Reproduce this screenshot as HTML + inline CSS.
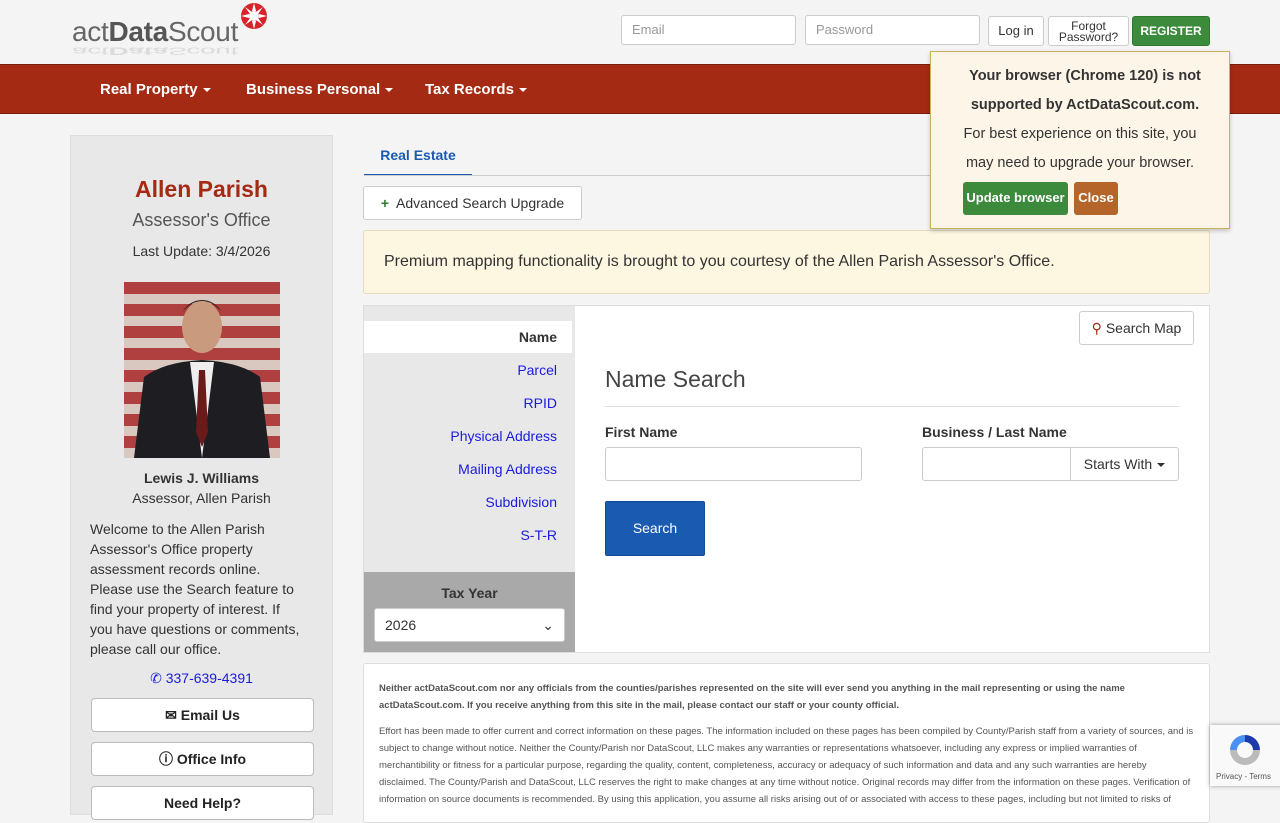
<!DOCTYPE html>
<html><head><meta charset="utf-8"><style>
*{box-sizing:border-box}
body{margin:0;width:1280px;height:800px;overflow:hidden;background:#f4f4f4;font-family:"Liberation Sans",sans-serif;color:#333;position:relative}
.a{position:absolute}
.inp{position:absolute;background:#fff;border:1px solid #ccc;border-radius:3px;font-size:13px;color:#999;padding:6px 10px}
.btn{position:absolute;border:1px solid #ccc;background:#fff;border-radius:3px;font-size:13px;text-align:center}
.nav{top:64px;left:0;width:1280px;height:50px;background:#a52a14;border-top:1px solid #7a1d0d;border-bottom:1px solid #7a1d0d}
.nav span{position:absolute;top:16px;color:#fff;font-weight:bold;font-size:15px}
.caret{display:inline-block;border-top:4px solid currentColor;border-left:4px solid transparent;border-right:4px solid transparent;vertical-align:middle;margin-left:5px}
.side{left:70px;top:135px;width:263px;height:680px;background:#e8e8e8;border:1px solid #ddd}
.c{text-align:center;width:100%;left:0}
.sb{position:absolute;left:20px;width:223px;height:34px;background:#fff;border:1px solid #bbb;border-radius:4px;font-weight:bold;font-size:14px;text-align:center;line-height:32px;color:#222}
.lnk{position:absolute;right:18px;color:#1a1adf;font-size:14px}
</style></head><body>
<div class="a" style="left:72px;top:18px;font-size:28px;line-height:28px;color:#666;letter-spacing:-0.3px">act<b style="color:#555">Data</b>Scout</div>
<div class="a" style="left:72px;top:37px;font-size:28px;line-height:28px;color:#ccc;transform:scaleY(-0.4);transform-origin:center;opacity:.6;letter-spacing:-0.3px">act<b>Data</b>Scout</div>
<svg class="a" style="left:240px;top:2px" width="28" height="28" viewBox="-14 -14 28 28"><g fill="#d8232a"><circle r="13" fill="#d8232a"/><circle r="5" fill="#fff"/><path d="M0-13L2-5-2-5Z M13 0L5 2 5-2Z M0 13L-2 5 2 5Z M-13 0L-5-2-5 2Z" fill="#fff"/><path d="M9-9L4-2 2-4Z M9 9L2 4 4 2Z M-9 9L-4 2-2 4Z M-9-9L-2-4-4-2Z" fill="#fff"/></g></svg>
<div class="inp" style="left:621px;top:15px;width:175px;height:30px">Email</div>
<div class="inp" style="left:805px;top:15px;width:175px;height:30px">Password</div>
<div class="btn" style="left:988px;top:16px;width:56px;height:30px;line-height:28px">Log in</div>
<div class="btn" style="left:1048px;top:16px;width:81px;height:30px;font-size:12px;line-height:11px;padding-top:4px">Forgot<br>Password?</div>
<div class="btn" style="left:1132px;top:16px;width:78px;height:30px;line-height:28px;background:#3c8a3c;border-color:#2f7a2f;color:#fff;font-weight:bold;font-size:12px">REGISTER</div>
<div class="a nav"><span style="left:100px">Real Property<i class="caret"></i></span><span style="left:246px">Business Personal<i class="caret"></i></span><span style="left:425px">Tax Records<i class="caret"></i></span></div>

<div class="a side">
<div class="a c" style="top:40px;font-size:23px;font-weight:bold;color:#a52a14">Allen Parish</div>
<div class="a c" style="top:74px;font-size:18px;color:#555">Assessor's Office</div>
<div class="a c" style="top:107px;font-size:14px">Last Update: 3/4/2026</div>
<div class="a" style="left:53px;top:146px;width:156px;height:176px;background:repeating-linear-gradient(180deg,#b04040 0 12px,#d9c8c0 12px 22px);overflow:hidden">
<svg width="156" height="176"><ellipse cx="78" cy="45" rx="20" ry="26" fill="#c99a7e"/><path d="M58 30 Q78 8 98 30 Q90 18 78 18 Q66 18 58 30Z" fill="#2a201c"/><path d="M10 176 L20 95 Q40 80 78 78 Q116 80 136 95 L146 176Z" fill="#1d1d22"/><path d="M66 80 L78 176 L90 80Z" fill="#eee"/><path d="M75 88 L81 88 L84 150 L78 165 L72 150Z" fill="#6a1a18"/></svg></div>
<div class="a c" style="top:334px;font-size:14px;font-weight:bold">Lewis J. Williams</div>
<div class="a c" style="top:354px;font-size:14px">Assessor, Allen Parish</div>
<div class="a" style="left:19px;top:383px;width:240px;font-size:14px;line-height:20px;white-space:nowrap">Welcome to the Allen Parish<br>Assessor's Office property<br>assessment records online.<br>Please use the Search feature to<br>find your property of interest. If<br>you have questions or comments,<br>please call our office.</div>
<div class="a c" style="top:534px;font-size:14px;color:#1a1adf">&#9990; 337-639-4391</div>
<div class="sb" style="top:562px">&#9993; Email Us</div>
<div class="sb" style="top:606px">&#9432; Office Info</div>
<div class="sb" style="top:650px">Need Help?</div>
</div>

<div class="a" style="left:364px;top:138px;width:108px;height:38px;border-bottom:2px solid #1a5ab0;color:#1a5ab0;font-weight:bold;font-size:14px;text-align:center;line-height:34px;background:#f4f4f4">Real Estate</div>
<div class="a" style="left:364px;top:175px;width:580px;height:1px;background:#ccc"></div>
<div class="btn" style="left:363px;top:186px;width:219px;height:34px;line-height:32px;font-size:14px;color:#333"><b style="color:#2f7a2f">+</b>&nbsp; Advanced Search Upgrade</div>
<div class="a" style="left:363px;top:230px;width:847px;height:64px;background:#fdf6e0;border:1px solid #e6dcbd;border-radius:3px;font-size:16px;padding:22px 20px">Premium mapping functionality is brought to you courtesy of the Allen Parish Assessor's Office.</div>

<div class="a" style="left:363px;top:305px;width:847px;height:348px;background:#fff;border:1px solid #ddd"></div>
<div class="a" style="left:364px;top:306px;width:211px;height:266px;background:#e8e8e8"></div>
<div class="a" style="left:364px;top:321px;width:208px;height:32px;background:#fff;font-weight:bold;font-size:14px;text-align:right;padding:8px 15px 0 0">Name</div>
<div class="lnk" style="left:364px;width:193px;text-align:right;top:362px">Parcel</div>
<div class="lnk" style="left:364px;width:193px;text-align:right;top:395px">RPID</div>
<div class="lnk" style="left:364px;width:193px;text-align:right;top:428px">Physical Address</div>
<div class="lnk" style="left:364px;width:193px;text-align:right;top:461px">Mailing Address</div>
<div class="lnk" style="left:364px;width:193px;text-align:right;top:494px">Subdivision</div>
<div class="lnk" style="left:364px;width:193px;text-align:right;top:527px">S-T-R</div>
<div class="a" style="left:364px;top:572px;width:211px;height:80px;background:#a9a9a9"></div>
<div class="a" style="left:364px;top:585px;width:211px;text-align:center;font-weight:bold;font-size:14px">Tax Year</div>
<div class="inp" style="left:374px;top:608px;width:191px;height:34px;color:#333;font-size:14px;padding:8px 10px">2026<span style="float:right">&#8964;</span></div>
<div class="btn" style="left:1079px;top:311px;width:115px;height:34px;line-height:32px;font-size:14px;color:#333"><span style="color:#a52a14">&#9906;</span> Search Map</div>
<div class="a" style="left:605px;top:366px;font-size:23px;color:#444">Name Search</div>
<div class="a" style="left:605px;top:406px;width:574px;height:1px;background:#ddd"></div>
<div class="a" style="left:605px;top:424px;font-size:14px;font-weight:bold">First Name</div>
<div class="a" style="left:922px;top:424px;font-size:14px;font-weight:bold">Business / Last Name</div>
<div class="inp" style="left:605px;top:447px;width:257px;height:34px"></div>
<div class="inp" style="left:922px;top:447px;width:149px;height:34px;border-radius:3px 0 0 3px"></div>
<div class="btn" style="left:1070px;top:447px;width:109px;height:34px;line-height:32px;font-size:14px;border-radius:0 3px 3px 0">Starts With<i class="caret"></i></div>
<div class="a" style="left:605px;top:501px;width:100px;height:55px;background:#1a5ab0;border:1px solid #124a96;border-radius:2px;color:#fff;font-size:14px;text-align:center;line-height:53px">Search</div>

<div class="a" style="left:363px;top:663px;width:847px;height:160px;background:#fff;border:1px solid #ddd;border-radius:3px;padding:16px 15px;font-size:9.5px;line-height:17px;color:#555">
<div style="font-weight:bold">Neither actDataScout.com nor any officials from the counties/parishes represented on the site will ever send you anything in the mail representing or using the name<br>actDataScout.com. If you receive anything from this site in the mail, please contact our staff or your county official.</div>
<div style="margin-top:9px">Effort has been made to offer current and correct information on these pages. The information included on these pages has been compiled by County/Parish staff from a variety of sources, and is subject to change without notice. Neither the County/Parish nor DataScout, LLC makes any warranties or representations whatsoever, including any express or implied warranties of merchantibility or fitness for a particular purpose, regarding the quality, content, completeness, accuracy or adequacy of such information and data and any such warranties are hereby disclaimed. The County/Parish and DataScout, LLC reserves the right to make changes at any time without notice. Original records may differ from the information on these pages. Verification of information on source documents is recommended. By using this application, you assume all risks arising out of or associated with access to these pages, including but not limited to risks of</div>
</div>

<div class="a" style="left:1210px;top:725px;width:80px;height:61px;background:#f9f9f9;box-shadow:0 0 4px #999"><svg class="a" style="left:16px;top:6px" width="38" height="38" viewBox="0 0 38 38"><path d="M19 4 A15 15 0 0 1 34 19 L27 19 A8 8 0 0 0 19 11Z" fill="#1c3aa9"/><path d="M4 19 A15 15 0 0 1 19 4 L19 11 A8 8 0 0 0 11 19Z" fill="#4a90f0"/><path d="M34 19 A15 15 0 0 1 4 19 L11 19 A8 8 0 0 0 27 19Z" fill="#bbb"/></svg><div class="a" style="left:6px;top:47px;font-size:8px;color:#555">Privacy - Terms</div></div>

<div class="a" style="left:930px;top:51px;width:300px;height:178px;background:#fdf5e8;border:1px solid #c8b058;box-shadow:0 2px 4px rgba(0,0,0,.2);font-size:14.5px;line-height:29px;text-align:center;padding-top:10px">
<div style="font-weight:bold;padding-left:10px">Your browser (Chrome 120) is not<br>supported by ActDataScout.com.</div>
<div>For best experience on this site, you<br>may need to upgrade your browser.</div>
<div class="a" style="left:32px;top:130px;width:105px;height:33px;background:#3c8a3c;border-radius:3px;color:#fff;font-weight:bold;font-size:13px;line-height:32px">Update browser</div>
<div class="a" style="left:143px;top:130px;width:44px;height:33px;background:#b5652a;border-radius:3px;color:#fff;font-weight:bold;font-size:13px;line-height:32px">Close</div>
</div>
</body></html>
